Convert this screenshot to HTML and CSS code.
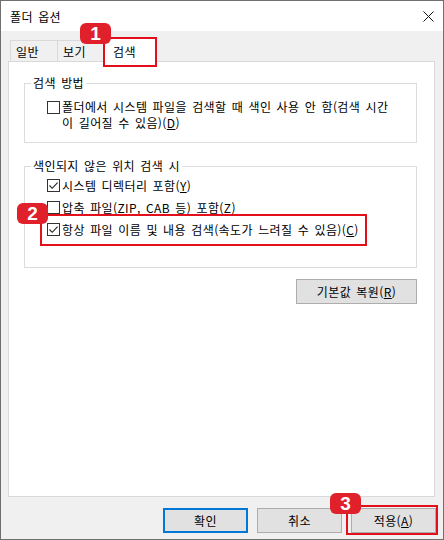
FILE: index.html
```html
<!DOCTYPE html>
<html lang="ko">
<head>
    <meta charset="UTF-8">
    <title>폴더 옵션</title>
    <link rel="stylesheet" href="styles.css">
</head>
<body>

    <div class="window">
        <!-- Title bar -->
        <div class="titlebar">
            <span class="title">폴더 옵션</span>
            <svg class="close" width="11" height="11" viewBox="0 0 11 11">
                <path d="M0.5 0.5 L10.5 10.5 M10.5 0.5 L0.5 10.5" stroke="#111" stroke-width="1" fill="none"/>
            </svg>
        </div>

        <!-- Tabs -->
        <div class="tabs">
            <div class="tab">일반</div>
            <div class="tab">보기</div>
            <div class="tab tab-active">검색</div>
        </div>

        <!-- Search tab page -->
        <div class="panel">
            <fieldset class="group group-method">
                <legend>검색 방법</legend>
                <div class="option option-multi">
                    <span class="check"></span>
                    <span class="label">폴더에서 시스템 파일을 검색할 때 색인 사용 안 함(검색 시간<br>이 길어질 수 있음)(<u>D</u>)</span>
                </div>
            </fieldset>

            <fieldset class="group group-nonindexed">
                <legend>색인되지 않은 위치 검색 시</legend>
                <div class="option">
                    <span class="check"><svg width="11" height="11" viewBox="0 0 11 11"><path d="M1.5 5.5 L4.2 8.3 L9.6 2.6" stroke="#222" stroke-width="1.1" fill="none"/></svg></span>
                    <span class="label">시스템 디렉터리 포함(<u>Y</u>)</span>
                </div>
                <div class="option">
                    <span class="check"></span>
                    <span class="label">압축 파일(ZIP, CAB 등) 포함(<u>Z</u>)</span>
                </div>
                <div class="option">
                    <span class="check"><svg width="11" height="11" viewBox="0 0 11 11"><path d="M1.5 5.5 L4.2 8.3 L9.6 2.6" stroke="#222" stroke-width="1.1" fill="none"/></svg></span>
                    <span class="label">항상 파일 이름 및 내용 검색(속도가 느려질 수 있음)(<u>C</u>)</span>
                </div>
            </fieldset>

            <div class="panel-actions">
                <button class="btn btn-restore">기본값 복원(<u>R</u>)</button>
            </div>
        </div>

        <!-- Dialog buttons -->
        <div class="footer">
            <button class="btn btn-default">확인</button>
            <button class="btn">취소</button>
            <button class="btn">적용(<u>A</u>)</button>
        </div>

        <!-- Tutorial markers -->
        <div class="mark mark-tab"></div>
        <div class="badge badge-tab">1</div>
        <div class="mark mark-option"></div>
        <div class="badge badge-option">2</div>
        <div class="mark mark-apply"></div>
        <div class="badge badge-apply">3</div>
    </div>

</body>
</html>
```

FILE: styles.css
```css
body {
    margin: 0;
    background-color: #f0f0f0;
}

/* Dialog frame */
.window {
    position: relative;
    width: 444px;
    height: 540px;
    box-sizing: border-box;
    border: 1px solid #6f6f6f;
    background-color: #f0f0f0;
    display: flex;
    flex-direction: column;
    font-family: "Noto Sans CJK KR", "Liberation Sans", sans-serif;
    font-size: 12px;
    line-height: 15px;
    letter-spacing: 0.4px;
    word-spacing: 1.5px;
    color: #000;
}

.titlebar {
    height: 30px;
    flex-shrink: 0;
    background-color: #fff;
    display: flex;
    align-items: center;
    justify-content: space-between;
    padding: 0 9px 0 9px;
}

/* Tab strip */
.tabs {
    display: flex;
    align-items: flex-end;
    padding: 6px 0 0 9px;
    flex-shrink: 0;
}

.tab {
    width: 48px;
    height: 21px;
    box-sizing: border-box;
    border: 1px solid #d9d9d9;
    border-bottom: none;
    padding: 3px 0 0 5px;
    background-color: #f0f0f0;
}

.tab + .tab {
    margin-left: -1px;
}

.tab-active {
    position: relative;
    z-index: 1;
    width: 52px;
    height: 25px;
    margin-bottom: -1px;
    padding: 6px 0 0 8px;
    background-color: #fff;
}

/* Tab page */
.panel {
    height: 436px;
    flex-shrink: 0;
    box-sizing: border-box;
    margin: 0 8px 0 7px;
    padding: 13px 17px 0 15px;
    border: 1px solid #d9d9d9;
    background-color: #fff;
}

.group {
    margin: 0;
    min-width: 0;
    border: 1px solid #dcdcdc;
    padding: 0 6px 11px 6px;
}

.group legend {
    padding: 0 2px;
    line-height: 16px;
}

.group-nonindexed {
    margin-top: 15px;
    padding-bottom: 27px;
}

.option {
    display: flex;
    align-items: center;
    height: 22px;
    margin-left: 16px;
    white-space: nowrap;
}

.option-multi {
    align-items: flex-start;
    height: auto;
    margin-top: 8px;
    line-height: 16px;
}

.option-multi .check {
    margin-top: 2px;
}

.check {
    width: 13px;
    height: 13px;
    box-sizing: border-box;
    border: 1px solid #333;
    background-color: #fff;
    margin-right: 2px;
    flex-shrink: 0;
}

.check svg {
    display: block;
}

.panel-actions {
    display: flex;
    justify-content: flex-end;
    margin-top: 11px;
}

/* Buttons */
.btn {
    height: 25px;
    width: 85px;
    box-sizing: border-box;
    border: 1px solid #adadad;
    background-color: #e1e1e1;
    font-family: inherit;
    font-size: 12px;
    letter-spacing: inherit;
    word-spacing: inherit;
    color: #000;
    padding: 0;
}

.btn-restore {
    width: 121px;
}

.btn-default {
    border: 2px solid #0078d7;
}

.footer {
    display: flex;
    justify-content: flex-end;
    gap: 9px;
    padding: 11px 7px 0 0;
}

/* Red tutorial markers drawn over the dialog */
.mark {
    position: absolute;
    box-sizing: border-box;
    border: 2px solid #e3101b;
    z-index: 2;
}

.mark-tab {
    left: 102px;
    top: 36px;
    width: 54px;
    height: 30px;
}

.mark-option {
    left: 39px;
    top: 213px;
    width: 327px;
    height: 32px;
}

.mark-apply {
    left: 345px;
    top: 504px;
    width: 92px;
    height: 30px;
}

.badge {
    position: absolute;
    z-index: 3;
    width: 31px;
    height: 21px;
    border-radius: 6px;
    background-color: #e0202a;
    color: #fff;
    font-family: "Liberation Sans", Arial, sans-serif;
    font-weight: bold;
    font-size: 19px;
    line-height: 21px;
    letter-spacing: 0;
    text-align: center;
}

.badge-tab {
    left: 79px;
    top: 22px;
}

.badge-option {
    left: 16px;
    top: 202px;
}

.badge-apply {
    left: 329px;
    top: 492px;
}
```
